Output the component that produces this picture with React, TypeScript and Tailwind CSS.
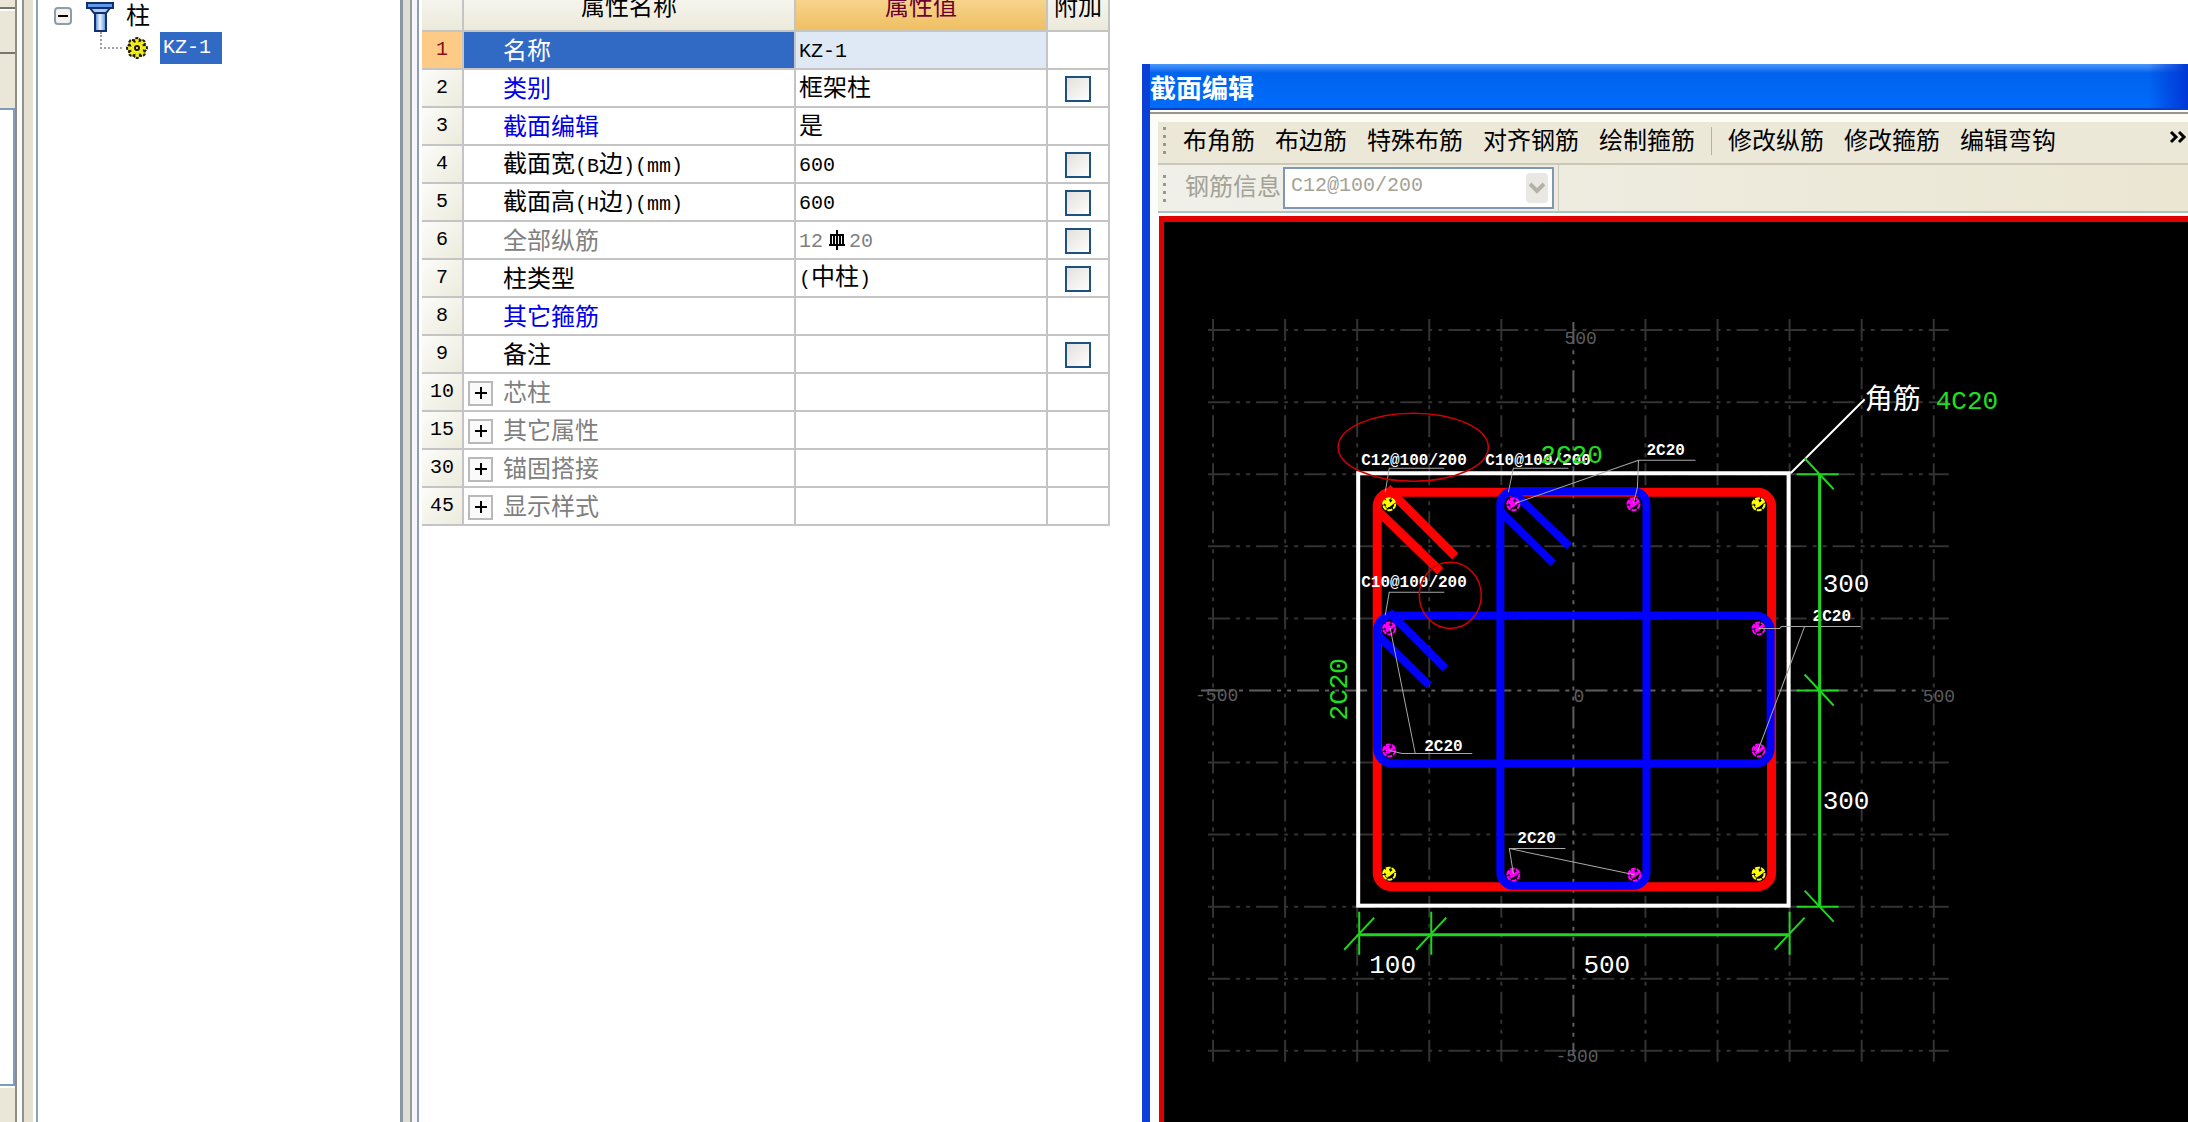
import { Fragment } from 'react';
import clsx from 'clsx';

const properties = [
  { no: 1, name: '名称', value: 'KZ-1', selected: true },
  { no: 2, name: '类别', value: '框架柱', color: 'text-[#0000e8]', extra: true },
  { no: 3, name: '截面编辑', value: '是', color: 'text-[#0000e8]' },
  { no: 4, name: '截面宽(B边)(mm)', value: '600', extra: true },
  { no: 5, name: '截面高(H边)(mm)', value: '600', extra: true },
  { no: 6, name: '全部纵筋', value: '12Φ20', color: 'text-[#808080]', extra: true },
  { no: 7, name: '柱类型', value: '(中柱)', extra: true },
  { no: 8, name: '其它箍筋', value: '', color: 'text-[#0000e8]' },
  { no: 9, name: '备注', value: '', extra: true },
  { no: 10, name: '芯柱', value: '', color: 'text-[#808080]', group: true },
  { no: 15, name: '其它属性', value: '', color: 'text-[#808080]', group: true },
  { no: 30, name: '锚固搭接', value: '', color: 'text-[#808080]', group: true },
  { no: 45, name: '显示样式', value: '', color: 'text-[#808080]', group: true },
];

const drawTools = ['布角筋', '布边筋', '特殊布筋', '对齐钢筋', '绘制箍筋'];
const editTools = ['修改纵筋', '修改箍筋', '编辑弯钩'];

// grid lines are 72 units apart, origin in the middle of the column
const gridLines = [-5, -4, -3, -2, -1, 1, 2, 3, 4, 5].map(n => n * 72);

const cornerBars = [[-184, -186], [185, -186], [-184, 183], [185, 183]];
const sideBars = [
  [-60, -186], [60, -186], [-184, -62], [185, -62],
  [-184, 60], [185, 60], [-60, 184], [61, 184],
];

const RebarSymbol = () => (
  <svg className="mr-0.5 ml-1 inline-block h-6 w-5 align-middle" viewBox="0 0 20 24" fill="none" stroke="#000" strokeWidth="2">
    <path d="M10 2v20M4 7h12v10H4zM7 7v10M13 7v10M2 17h16" />
  </svg>
);

// half-width characters are set in the mono face next to the 24px Chinese text
const Mixed = ({ text }: { text: string }) => (
  <>
    {text.split(/([\x20-\x7e]+)/).map((part, i) => {
      if (part === 'Φ') return <RebarSymbol key={i} />;
      if (/^[\x20-\x7e]+$/.test(part)) {
        return <span key={i} className="font-['Liberation_Mono',monospace] text-xl leading-6">{part}</span>;
      }
      return <Fragment key={i}>{part}</Fragment>;
    })}
  </>
);

const ColumnIcon = () => (
  <svg className="h-8 w-7" viewBox="0 0 28 32">
    <defs>
      <linearGradient id="shaft">
        <stop offset="0" stopColor="#3f7fd8" />
        <stop offset="0.45" stopColor="#f2f8ff" />
        <stop offset="1" stopColor="#4a86dc" />
      </linearGradient>
    </defs>
    <path d="M1 3h26v5H1z" fill="#5f9be8" stroke="#12306e" strokeWidth="2" />
    <path d="M4 8h20l-4 5H8z" fill="#a9cdf8" stroke="#12306e" strokeWidth="2" />
    <path d="M9 13h11v18H9z" fill="url(#shaft)" stroke="#12306e" strokeWidth="2" />
  </svg>
);

const FlowerIcon = () => (
  <svg className="h-[22px] w-[22px]" viewBox="-11 -11 22 22">
    {[0, 45, 90, 135, 180, 225, 270, 315].map(a => (
      <ellipse key={a} cx="0" cy="-7" rx="3" ry="3" fill="#f4ec1c" stroke="#1c1c00" strokeWidth="2" strokeDasharray="3 1" transform={`rotate(${a})`} />
    ))}
    <circle r="6" fill="#f4ec1c" />
    <circle r="2" fill="#fff" stroke="#1c1c00" strokeWidth="2" />
  </svg>
);

const SideStrip = () => (
  <div className="flex w-[17px] shrink-0 flex-col border-r-2 border-[#8d8d85] bg-[#ebe7d8]">
    <div className="h-[9px] border-b-2 border-[#77766c]" />
    <div className="h-[45px] border-t-2 border-b-2 border-t-white border-b-[#77766c]" />
    <div className="h-[54px]" />
    <div className="flex-1 border-t-2 border-r-2 border-b-2 border-[#7f9db9] bg-white" />
    <div className="h-9 border-t-2 border-white" />
  </div>
);

const ComponentTree = () => (
  <div className="w-[364px] shrink-0 border-l-2 border-[#8ba3ba] bg-white text-2xl">
    <div className="flex h-8 items-center pl-4">
      <button aria-label="折叠" className="flex h-[18px] w-[18px] items-center justify-center rounded-sm border-2 border-[#8f9cab] bg-[#f4f3ee]">
        <span className="h-[2px] w-2.5 bg-black" />
      </button>
      <span className="ml-3.5"><ColumnIcon /></span>
      <span className="ml-3 leading-8">柱</span>
    </div>
    <div className="flex h-8 items-center pl-[62px]">
      <span className="mb-auto h-[17px] w-[22px] border-b-2 border-l-2 border-dotted border-[#a0a0a0]" />
      <span className="ml-1"><FlowerIcon /></span>
      <button className="ml-3 h-8 w-[62px] bg-[#316ac5] pl-[3px] text-left font-['Liberation_Mono',monospace] text-xl text-white">
        KZ-1
      </button>
    </div>
  </div>
);

const Divider = () => (
  <div className="flex shrink-0">
    <div className="w-[3px] bg-[#8c96a2]" />
    <div className="w-[7px] bg-[#dedfd3]" />
    <div className="w-[2px] bg-[#969b9b]" />
    <div className="w-[5px] bg-[#f6f6fa]" />
    <div className="w-[2px] bg-[#8d9fba]" />
  </div>
);

const PropertyTable = () => (
  <div className="w-[723px] shrink-0 overflow-hidden bg-white pl-[3px]">
    <table className="-mt-4 w-[688px] table-fixed border-separate border-spacing-0 text-2xl leading-6">
      <colgroup>
        <col className="w-[42px]" />
        <col className="w-[332px]" />
        <col className="w-[252px]" />
        <col className="w-[62px]" />
      </colgroup>
      <thead>
        <tr className="h-12 bg-linear-to-b from-[#fbfaf6] to-[#ebe9da]">
          <th aria-label="序号" className="border-r-2 border-b-2 border-[#c4c4c0]" />
          <th className="border-r-2 border-b-2 border-[#c4c4c0] p-0 font-normal">属性名称</th>
          <th className="border-r-2 border-b-2 border-[#c4c4c0] bg-linear-to-b from-[#fbdf9f] to-[#efbf62] p-0 font-normal text-[#6b0030]">属性值</th>
          <th className="border-r-2 border-b-2 border-[#c4c4c0] p-0 font-normal">附加</th>
        </tr>
      </thead>
      <tbody>
        {properties.map(row => (
          <tr key={row.no} className="h-[38px]">
            <td
              className={clsx(
                "border-r-2 border-b-2 border-[#c4c4c4] p-0 text-center font-['Liberation_Mono',monospace] text-xl",
                row.selected ? 'bg-[#fdcb85] text-[#8a1010]' : 'bg-linear-to-br from-[#fcfcfa] to-[#ecebdc]',
              )}
            >
              {row.no}
            </td>
            <td className={clsx('border-r-2 border-b-2 border-[#c4c4c4] p-0', row.selected ? 'bg-[#316ac5] text-white' : row.color)}>
              <div className="flex items-center pt-0.5">
                <span className="w-[39px] shrink-0 pl-1">
                  {row.group && (
                    <button aria-label={`展开${row.name}`} className="flex h-[25px] w-[25px] items-center justify-center border-2 border-[#b9b9b9] bg-[#fafafa]">
                      <svg className="h-4 w-4" viewBox="0 0 16 16" stroke="#000" strokeWidth="2"><path d="M2 8h12M8 2v12" /></svg>
                    </button>
                  )}
                </span>
                <span className="whitespace-nowrap"><Mixed text={row.name} /></span>
              </div>
            </td>
            <td className={clsx('border-r-2 border-b-2 border-[#c4c4c4] p-0 pl-[3px] whitespace-nowrap', row.selected && 'bg-[#dfe9f6]', row.no === 6 && 'text-[#808080]')}>
              <Mixed text={row.value} />
            </td>
            <td className="border-r-2 border-b-2 border-[#c4c4c4] p-0 pt-0.5">
              {row.extra && (
                <input
                  type="checkbox"
                  aria-label={`附加${row.name}`}
                  className="mx-auto block h-[26px] w-[26px] appearance-none border-2 border-[#1c5180] bg-linear-to-br from-[#e2e0da] to-white"
                />
              )}
            </td>
          </tr>
        ))}
      </tbody>
    </table>
  </div>
);

const Grip = () => (
  <div className="flex w-1 flex-col gap-[5px]">
    <i className="h-[3px] w-[3px] bg-[#99968a]" />
    <i className="h-[3px] w-[3px] bg-[#99968a]" />
    <i className="h-[3px] w-[3px] bg-[#99968a]" />
    <i className="h-[3px] w-[3px] bg-[#99968a]" />
  </div>
);

const Bar = ({ x, y, color }: { x: number; y: number; color: string }) => (
  <g transform={`translate(${x} ${y})`} stroke={color} fill="none">
    <circle r="6" strokeWidth="2" strokeDasharray="5 1" />
    <path d="M-5 -3L0 1L5 -3M-2 -5L0 0L-3 3" strokeWidth="3" />
  </g>
);

const SectionDrawing = () => (
  <svg
    className="block h-full w-full bg-black font-['Liberation_Mono','Noto_Sans_CJK_SC',monospace]"
    viewBox="-409 -468 1023 900"
    preserveAspectRatio="xMinYMin slice"
    fill="none"
  >
    <g stroke="#333" strokeWidth="2" strokeDasharray="22 6 4 6 4 6">
      {gridLines.map(p => (
        <Fragment key={p}>
          <path d={`M-365 ${p}H375`} />
          <path d={`M${p} -371V371`} />
        </Fragment>
      ))}
      <path d="M-372 0H350M0 -368V365" stroke="#5e5e5e" />
    </g>
    <g fill="#5c5c5c" fontSize="18">
      <text x="-9" y="-346">500</text>
      <text x="0" y="12">0</text>
      <text x="-378" y="11">-500</text>
      <text x="349" y="12">500</text>
      <text x="-18" y="371">-500</text>
    </g>

    {/* stirrups */}
    <rect x="-215" y="-217" width="430" height="432" stroke="#fff" strokeWidth="4" />
    <g stroke="#f00" strokeWidth="9">
      <rect x="-196" y="-198" width="394" height="394" rx="14" />
      <path d="M-186 -202L-118 -134M-196 -180L-133 -119" />
    </g>
    <g stroke="#00f" strokeWidth="8">
      <rect x="-73" y="-199" width="146" height="394" rx="13" />
      <path d="M-62 -200L-4 -144M-74 -180L-20 -127" />
      <rect x="-196" y="-75" width="393" height="148" rx="15" />
      <path d="M-184 -78L-128 -22M-196 -56L-144 -5" />
    </g>

    {cornerBars.map(([x, y]) => <Bar key={`${x},${y}`} x={x} y={y} color="#ff0" />)}
    {sideBars.map(([x, y]) => <Bar key={`${x},${y}`} x={x} y={y} color="#f0f" />)}

    {/* leaders */}
    <g stroke="#a8a8a8" strokeWidth="1">
      <path d="M-188 -198L-184 -222H-129" />
      <path d="M-65 -198L-60 -222H-5" />
      <path d="M-58 -187L65 -230H122M65 -230L64 -203L60 -187" />
      <path d="M-188 -75L-184 -98H-129" />
      <path d="M-183 -62L-158 63M-184 60L-171 63H-101" />
      <path d="M185 -62H206L208 -64H287M231 -64L184 61" />
      <path d="M-60 183L-64 158H-8M-64 158L61 184" />
    </g>
    <path d="M217 -217L291 -291" stroke="#fff" strokeWidth="2" />
    <g fill="#fff" fontSize="16" fontWeight="bold">
      <text x="-212" y="-225">C12@100/200</text>
      <text x="-88" y="-225">C10@100/200</text>
      <text x="-212" y="-103">C10@100/200</text>
      <text x="73" y="-235">2C20</text>
      <text x="239" y="-69">2C20</text>
      <text x="-149" y="60">2C20</text>
      <text x="-56" y="152">2C20</text>
    </g>

    {/* dimensions */}
    <g stroke="#1fd61f" strokeWidth="2">
      <path d="M246 -216V216M-214 244H216" strokeWidth="3" />
      {[-216, 0, 216].map(y => <path key={y} d={`M223 ${y}h42M231 ${y - 16}l29 31`} />)}
      {[-214, -142, 216].map(x => <path key={x} d={`M${x} 221v43M${x + 15} 227l-30 32`} />)}
    </g>
    <g fill="#fff" fontSize="26">
      <text x="249" y="-98">300</text>
      <text x="249" y="118">300</text>
      <text x="-204" y="282">100</text>
      <text x="10" y="282">500</text>
      <text x="291" y="-281" fontSize="28">角筋</text>
    </g>
    <g fill="#1fe01f" fontSize="26">
      <text x="362" y="-281">4C20</text>
      <text x="-33" y="-227">2C20</text>
      <text transform="translate(-226 30) rotate(-90)">2C20</text>
    </g>

    <g stroke="#d40000" strokeWidth="1.5">
      <ellipse cx="-160" cy="-243" rx="75" ry="34" />
      <ellipse cx="-123" cy="-95" rx="31" ry="33" />
    </g>
  </svg>
);

const SectionEditor = () => (
  <section className="mt-16 flex min-w-0 flex-1 flex-col border-l-8 border-[#0b3fd6] bg-[#fbfdfb]">
    <header className="flex h-11 shrink-0 items-center bg-linear-to-b from-[#4a98fa] via-[#0063ee] via-20% to-[#006cfb]">
      <h1 className="flex-1 pt-1.5 text-[26px] leading-none font-bold text-white">截面编辑</h1>
      <div className="h-full w-10 bg-linear-to-r from-transparent to-[#0036d6]" />
    </header>
    <div className="h-1 shrink-0 border-t-2 border-[#0a3fc4] bg-white" />
    <div className="h-2.5 shrink-0 border-t-2 border-[#98968a] bg-[#fdfdf6]" />

    <div role="toolbar" className="ml-2 flex h-[41px] shrink-0 items-center bg-[#ebe8d8] pb-1 pl-[5px] text-2xl whitespace-nowrap">
      <Grip />
      <div className="ml-4 flex gap-5">
        {drawTools.map(tool => <button key={tool}>{tool}</button>)}
      </div>
      <div className="mx-4 h-7 w-px bg-[#b5b2a3]" />
      <div className="flex gap-5">
        {editTools.map(tool => <button key={tool}>{tool}</button>)}
      </div>
      <button aria-label="更多" className="mb-2 ml-auto w-5">
        <svg className="h-4 w-5" viewBox="0 0 20 16" fill="none" stroke="#000" strokeWidth="3">
          <path d="M3 3l5 5l-5 5M11 3l5 5l-5 5" />
        </svg>
      </button>
    </div>

    <div role="toolbar" className="ml-2 flex h-[50px] shrink-0 items-center border-t-2 border-b-2 border-t-[#cbc8b8] border-b-[#a9c2bb] bg-linear-to-r from-[#f0f0e9] to-[#ebe6d2] pl-[5px]">
      <Grip />
      <label htmlFor="rebar" className="ml-[18px] w-[98px] pb-0.5 text-2xl whitespace-nowrap text-[#a3a296]">钢筋信息</label>
      <div className="relative">
        <select
          id="rebar"
          disabled
          className="block h-[42px] w-[271px] appearance-none border-2 border-[#8195b5] bg-white pb-1 pl-1.5 font-['Liberation_Mono',monospace] text-xl text-[#a3a296] opacity-100"
        >
          <option>C12@100/200</option>
        </select>
        <span className="pointer-events-none absolute top-1.5 right-1.5 flex h-[30px] w-[22px] items-center justify-center rounded-sm bg-[#e9e8e2]">
          <svg className="h-3 w-4" viewBox="0 0 16 12" fill="none" stroke="#b4b2a6" strokeWidth="4"><path d="M1 2l7 7l7 -7" /></svg>
        </span>
      </div>
      <div className="ml-1 h-full w-px bg-[#c9c7ba]" />
    </div>

    <div className="mt-[3px] ml-[9px] min-h-0 flex-1 border-t-6 border-l-5 border-[#e00000]">
      <SectionDrawing />
    </div>
  </section>
);

export default function App() {
  return (
    <main className="flex h-screen overflow-hidden bg-white font-['Liberation_Sans','Noto_Sans_CJK_SC',sans-serif] text-black">
      <SideStrip />
      <div className="flex shrink-0">
        <div className="w-[5px] bg-[#fafafa]" />
        <div className="w-[2px] bg-[#8f9090]" />
        <div className="w-[9px] bg-[#e5e0cf]" />
        <div className="w-[3px] bg-white" />
      </div>
      <ComponentTree />
      <Divider />
      <PropertyTable />
      <SectionEditor />
    </main>
  );
}
